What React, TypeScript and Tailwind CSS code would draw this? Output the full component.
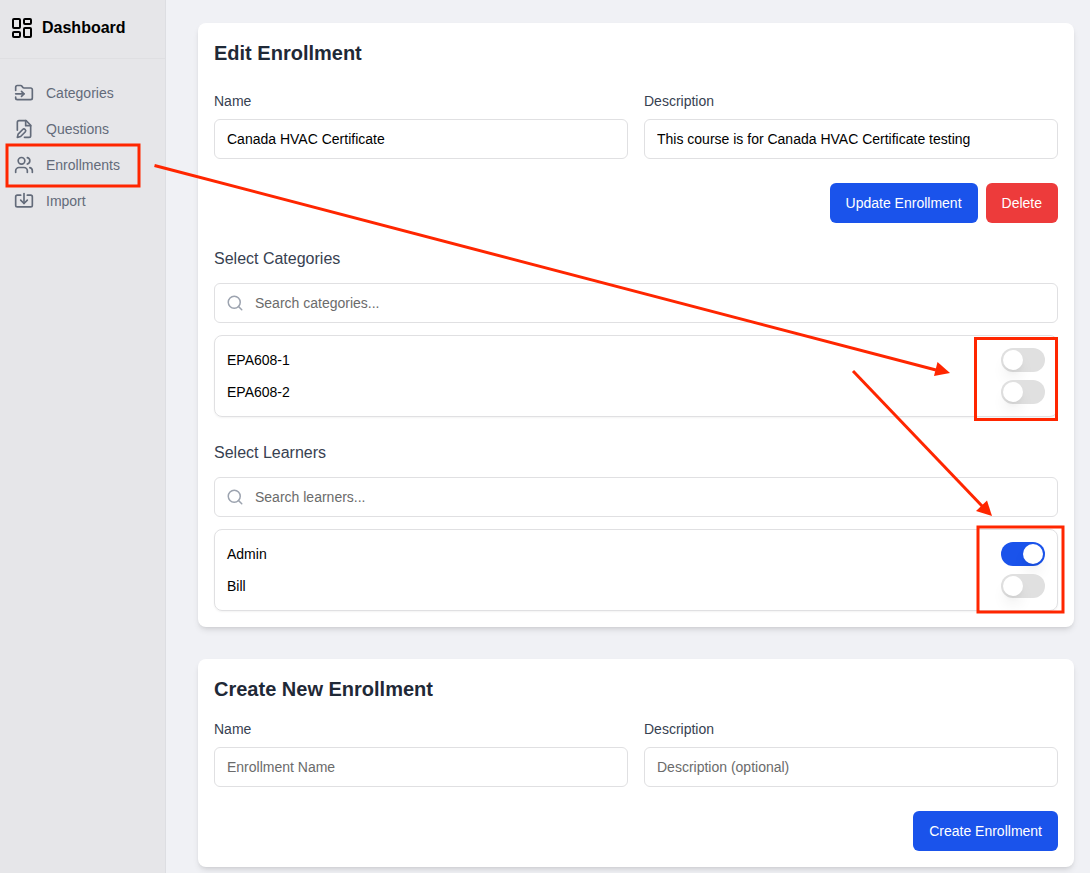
import { useState } from "react";
import { FolderInput, Import, LayoutDashboard, Search, Users } from "lucide-react";

function FileEdit({ className }: { className?: string; strokeWidth?: number }) {
  return (
    <svg className={className} viewBox="0 0 24 24" fill="none" stroke="currentColor" strokeWidth="2" strokeLinecap="round" strokeLinejoin="round" aria-hidden="true">
      <path d="M4 13.5V4a2 2 0 0 1 2-2h8.5L20 7.5V20a2 2 0 0 1-2 2h-5.500" />
      <path d="M14 2v6h6" />
      <path d="M10.420 12.610a2.100 2.100 0 1 1 2.970 2.970L7.950 21 4 22l.990-3.950 5.430-5.440Z" />
    </svg>
  );
}

const navItems = [
  { label: "Categories", Icon: FolderInput },
  { label: "Questions", Icon: FileEdit },
  { label: "Enrollments", Icon: Users },
  { label: "Import", Icon: Import },
];

function Field({ id, label, value, placeholder }: { id: string; label: string; value?: string; placeholder?: string }) {
  return (
    <div className="flex min-w-0 flex-1 flex-col gap-2">
      <label htmlFor={id} className="text-sm text-[#374151]">{label}</label>
      <input
        id={id}
        type="text"
        defaultValue={value}
        placeholder={placeholder}
        className="h-10 w-full rounded-md border border-[#e0e0e2] bg-white px-3 text-sm text-black placeholder:text-[#6b6b6b]"
      />
    </div>
  );
}

function Toggle({ id, label, on }: { id: string; label: string; on: boolean }) {
  const [checked, setChecked] = useState(on);
  return (
    <div className="flex items-center justify-between">
      <label htmlFor={id} className="text-sm text-black">{label}</label>
      <span className="relative flex h-6 w-11">
        <input
          id={id}
          type="checkbox"
          role="switch"
          checked={checked}
          onChange={(e) => setChecked(e.target.checked)}
          className="peer h-6 w-11 appearance-none rounded-full bg-[#e0e0e0] checked:bg-[#1a53eb]"
        />
        <span className="pointer-events-none absolute top-0.5 left-0.5 size-5 rounded-full bg-white shadow-lg peer-checked:left-auto peer-checked:right-0.5" />
      </span>
    </div>
  );
}

function Picker({ title, id, placeholder, items }: { title: string; id: string; placeholder: string; items: { name: string; on: boolean }[] }) {
  return (
    <section className="mt-6 flex flex-col gap-3">
      <h3 className="text-base text-[#374151]">{title}</h3>
      <div className="relative">
        <Search className="absolute top-[11px] left-3 size-[18px] text-[#9ca3af]" />
        <input
          id={id}
          type="text"
          aria-label={title}
          placeholder={placeholder}
          className="h-10 w-full rounded-md border border-[#e0e0e2] bg-white pr-3 pl-10 text-sm text-black placeholder:text-[#6b6b6b]"
        />
      </div>
      <div className="flex flex-col gap-2 rounded-lg border border-[#e0e0e2] p-3 shadow-xs">
        {items.map((item) => (
          <Toggle key={item.name} id={`${id}-${item.name}`} label={item.name} on={item.on} />
        ))}
      </div>
    </section>
  );
}

function Annotations() {
  return (
    <svg className="pointer-events-none absolute top-0 left-0" width="1090" height="873" fill="none" stroke="#ff2600" strokeWidth="3" aria-hidden="true">
      <rect x="7" y="145" width="132" height="41" />
      <rect x="975.5" y="338.5" width="81" height="81" />
      <rect x="978" y="527" width="85" height="85" />
      <path d="M154.5 165.5 L936 370" />
      <path d="M853 371 L983 507" />
      <path d="M950 373 L937.5 362 L934 376 Z" fill="#ff2600" stroke="none" />
      <path d="M992 516 L987 500.5 L976 511 Z" fill="#ff2600" stroke="none" />
    </svg>
  );
}

export default function App() {
  return (
    <div className="relative flex min-h-screen bg-[#f0f1f5] font-['Liberation_Sans',Arial,sans-serif]">
      <aside className="w-[166px] shrink-0 border-r border-[#dddee2] bg-[#e6e6e9]">
        <div className="flex h-[59px] items-center gap-2 border-b border-[#dfdfe2] px-2.5 pb-0.5 text-black">
          <LayoutDashboard className="size-6" />
          <span className="text-base font-bold">Dashboard</span>
        </div>
        <nav className="flex flex-col px-3.5 pt-4">
          {navItems.map(({ label, Icon }) => (
            <a key={label} href="#" className="flex h-9 items-center gap-3 text-sm text-[#636b7a]">
              <Icon className="size-5" strokeWidth={2} />
              {label}
            </a>
          ))}
        </nav>
      </aside>

      <main className="flex min-w-0 flex-1 flex-col gap-8 pt-[23px] pr-4 pb-1.5 pl-8">
        <section className="rounded-lg bg-white p-4 shadow-md">
          <h2 className="text-xl leading-7 font-bold text-[#1f2937]">Edit Enrollment</h2>
          <div className="mt-6 flex gap-4">
            <Field id="edit-name" label="Name" value="Canada HVAC Certificate" />
            <Field id="edit-description" label="Description" value="This course is for Canada HVAC Certificate testing" />
          </div>
          <div className="mt-6 flex justify-end gap-2">
            <button type="button" className="h-10 rounded-md bg-[#1a53eb] px-4 text-sm text-white">Update Enrollment</button>
            <button type="button" className="h-10 rounded-md bg-[#ed3b3b] px-4 text-sm text-white">Delete</button>
          </div>
          <Picker
            id="categories"
            title="Select Categories"
            placeholder="Search categories..."
            items={[{ name: "EPA608-1", on: false }, { name: "EPA608-2", on: false }]}
          />
          <Picker
            id="learners"
            title="Select Learners"
            placeholder="Search learners..."
            items={[{ name: "Admin", on: true }, { name: "Bill", on: false }]}
          />
        </section>

        <section className="rounded-lg bg-white p-4 shadow-md">
          <h2 className="text-xl leading-7 font-bold text-[#1f2937]">Create New Enrollment</h2>
          <div className="mt-4 flex gap-4">
            <Field id="new-name" label="Name" placeholder="Enrollment Name" />
            <Field id="new-description" label="Description" placeholder="Description (optional)" />
          </div>
          <div className="mt-6 flex justify-end">
            <button type="button" className="h-10 rounded-md bg-[#1a53eb] px-4 text-sm text-white">Create Enrollment</button>
          </div>
        </section>
      </main>
      <Annotations />
    </div>
  );
}
